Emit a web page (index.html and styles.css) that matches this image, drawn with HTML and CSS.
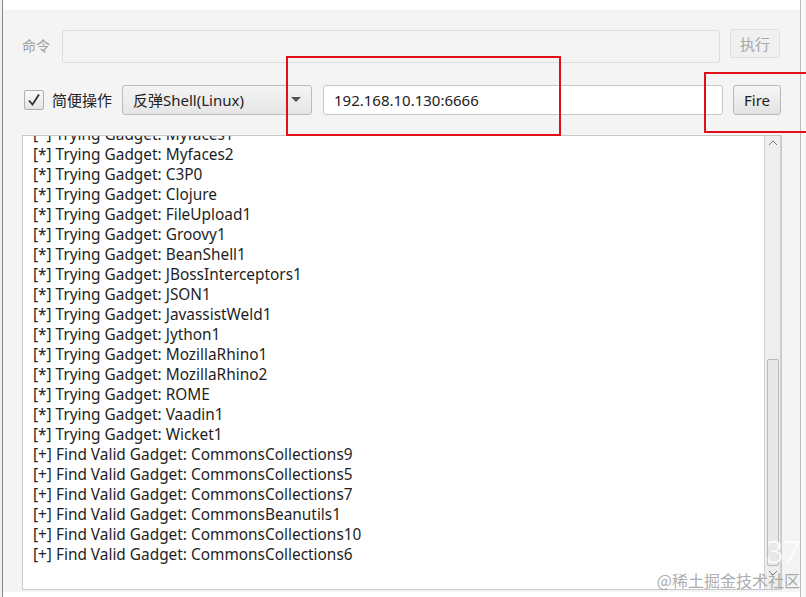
FILE: index.html
```html
<!DOCTYPE html>
<html>
<head>
<meta charset="utf-8">
<link rel="stylesheet" href="styles.css">
</head>
<body>
<div class="screen">
  <div class="bg-left"></div>
  <div class="window">
    <div class="row cmd-row">
      <span class="cmd-label">命令</span>
      <div class="cmd-input"></div>
      <div class="btn btn-disabled">执行</div>
    </div>
    <div class="row ctrl-row">
      <div class="check">
        <svg width="14" height="14" viewBox="0 0 14 14"><path d="M2 7.5 L5.5 11.5 L12 1.5" fill="none" stroke="#333" stroke-width="1.8"/></svg>
      </div>
      <span class="check-label">简便操作</span>
      <div class="combo">
        <span class="combo-text">反弹Shell(Linux)</span>
        <span class="combo-arrow"></span>
      </div>
      <div class="addr-input">192.168.10.130:6666</div>
      <div class="btn btn-fire">Fire</div>
    </div>
    <div class="output">
      <div class="lines">
        <div>[*] Trying Gadget: Myfaces1</div>
        <div>[*] Trying Gadget: Myfaces2</div>
        <div>[*] Trying Gadget: C3P0</div>
        <div>[*] Trying Gadget: Clojure</div>
        <div>[*] Trying Gadget: FileUpload1</div>
        <div>[*] Trying Gadget: Groovy1</div>
        <div>[*] Trying Gadget: BeanShell1</div>
        <div>[*] Trying Gadget: JBossInterceptors1</div>
        <div>[*] Trying Gadget: JSON1</div>
        <div>[*] Trying Gadget: JavassistWeld1</div>
        <div>[*] Trying Gadget: Jython1</div>
        <div>[*] Trying Gadget: MozillaRhino1</div>
        <div>[*] Trying Gadget: MozillaRhino2</div>
        <div>[*] Trying Gadget: ROME</div>
        <div>[*] Trying Gadget: Vaadin1</div>
        <div>[*] Trying Gadget: Wicket1</div>
        <div>[+] Find Valid Gadget: CommonsCollections9</div>
        <div>[+] Find Valid Gadget: CommonsCollections5</div>
        <div>[+] Find Valid Gadget: CommonsCollections7</div>
        <div>[+] Find Valid Gadget: CommonsBeanutils1</div>
        <div>[+] Find Valid Gadget: CommonsCollections10</div>
        <div>[+] Find Valid Gadget: CommonsCollections6</div>
      </div>
      <div class="scrollbar">
        <div class="sb-up"><svg width="10" height="6" viewBox="0 0 10 6"><path d="M1 5 L5 1 L9 5" fill="none" stroke="#777" stroke-width="1"/></svg></div>
        <div class="sb-track"></div>
        <div class="sb-thumb"></div>
        <div class="sb-down"><svg width="10" height="6" viewBox="0 0 10 6"><path d="M1 1 L5 5 L9 1" fill="none" stroke="#777" stroke-width="1"/></svg></div>
      </div>
    </div>
  </div>
  <div class="bg-right"></div>
  <div class="mark mark-1"></div>
  <div class="mark mark-2"></div>
  <div class="wm-num">37</div>
  <div class="wm-text">@稀土掘金技术社区</div>
</div>
</body>
</html>
```
FILE: styles.css
```css
html, body {
  margin: 0;
  padding: 0;
  background: #ffffff;
}
.screen {
  position: relative;
  width: 806px;
  height: 597px;
  overflow: hidden;
  display: flex;
  font-family: "Noto Sans", "Noto Sans CJK SC", sans-serif;
  background: #fff;
}
.bg-left {
  width: 3px;
  height: 597px;
  border-right: 1px solid #8a8a8a;
  box-sizing: border-box;
  background: #f0f0f0;
}
.window {
  margin-top: 10px;
  width: 797px;
  height: 582px;
  background: #f4f4f4;
  box-sizing: border-box;
  padding: 19px 0 0 19px;
  display: flex;
  flex-direction: column;
}
.bg-right {
  flex: 1;
  height: 597px;
  border-left: 1px solid #bdbdbd;
  background: #f7f7f7;
}
.row {
  display: flex;
  align-items: center;
}
.cmd-row {
  height: 35px;
  align-items: flex-start;
}
.cmd-label {
  width: 40px;
  margin-top: 6px;
  font-size: 14px;
  color: #a0a0a0;
  font-family: "Noto Sans CJK SC", sans-serif;
}
.cmd-input {
  width: 658px;
  height: 33px;
  box-sizing: border-box;
  border: 1px solid #dcdcdc;
  border-radius: 3px;
  background: #f4f4f4;
  margin-top: 1px;
}
.btn {
  box-sizing: border-box;
  border: 1px solid #b9b9b9;
  border-radius: 3px;
  background: linear-gradient(#f6f6f6, #e2e2e2);
  display: flex;
  align-items: center;
  justify-content: center;
  font-size: 15px;
  color: #222;
}
.btn-disabled {
  margin-left: 10px;
  width: 50px;
  height: 29px;
  border-color: #dedede;
  background: #f0f0f0;
  color: #a8a8a8;
  font-family: "Noto Sans CJK SC", sans-serif;
  font-size: 15px;
}
.ctrl-row {
  margin-top: 20px;
  height: 31px;
}
.check {
  width: 20px;
  height: 20px;
  margin-left: 2px;
  box-sizing: border-box;
  border: 1px solid #b0b0b0;
  border-radius: 2px;
  background: linear-gradient(#fafafa, #e4e4e4);
  display: flex;
  align-items: center;
  justify-content: center;
}
.check-label {
  margin-left: 8px;
  width: 70px;
  font-size: 15px;
  color: #222;
  font-family: "Noto Sans CJK SC", sans-serif;
}
.combo {
  width: 190px;
  height: 30px;
  box-sizing: border-box;
  border: 1px solid #bcbcbc;
  border-radius: 3px;
  background: linear-gradient(#f4f4f4, #e6e6e6);
  display: flex;
  align-items: center;
  padding-left: 10px;
}
.combo-text {
  flex: 1;
  font-size: 15px;
  color: #222;
}
.combo-arrow {
  width: 0;
  height: 0;
  margin-right: 10px;
  border-left: 5px solid transparent;
  border-right: 5px solid transparent;
  border-top: 5px solid #555;
}
.addr-input {
  margin-left: 11px;
  width: 400px;
  height: 30px;
  box-sizing: border-box;
  border: 1px solid #c8c8c8;
  border-radius: 3px;
  background: #fff;
  padding-left: 10px;
  display: flex;
  align-items: center;
  font-size: 15px;
  color: #222;
}
.btn-fire {
  margin-left: 10px;
  width: 48px;
  height: 30px;
}
.output {
  margin-top: 20px;
  width: 760px;
  height: 455px;
  box-sizing: border-box;
  border: 1px solid #c8c8c8;
  background: #fff;
  display: flex;
  overflow: hidden;
}
.lines {
  flex: 1;
  margin-top: -11px;
  padding-left: 10px;
  font-size: 15.4px;
  line-height: 20px;
  color: #1e1e1e;
}
.scrollbar {
  position: relative;
  width: 17px;
  height: 100%;
  box-sizing: border-box;
  border-left: 1px solid #d2d2d2;
  border-right: 1px solid #d2d2d2;
  background: #eeeeee;
  display: flex;
  flex-direction: column;
  align-items: center;
}
.sb-up {
  height: 14px;
  display: flex;
  align-items: center;
  justify-content: center;
}
.sb-track {
  height: 209px;
}
.sb-thumb {
  width: 12px;
  height: 207px;
  box-sizing: border-box;
  border: 1px solid #b8b8b8;
  border-radius: 2px;
  background: #e8e8e8;
}
.sb-down {
  height: 14px;
  display: flex;
  align-items: center;
  justify-content: center;
}
.mark {
  position: absolute;
  border: 2px solid #e0101a;
  box-sizing: border-box;
}
.mark-1 {
  left: 286px;
  top: 56px;
  width: 275px;
  height: 80px;
}
.mark-2 {
  left: 704px;
  top: 72px;
  width: 110px;
  height: 61px;
}
.wm-num {
  position: absolute;
  right: 6px;
  top: 538px;
  font-family: "Liberation Serif", serif;
  font-size: 34px;
  line-height: 28px;
  color: rgba(255,255,255,0.85);
}
.wm-text {
  position: absolute;
  right: 6px;
  top: 570px;
  font-family: "Noto Sans CJK SC", sans-serif;
  font-size: 16px;
  line-height: 20px;
  color: rgba(150,150,150,0.8);
}
```
